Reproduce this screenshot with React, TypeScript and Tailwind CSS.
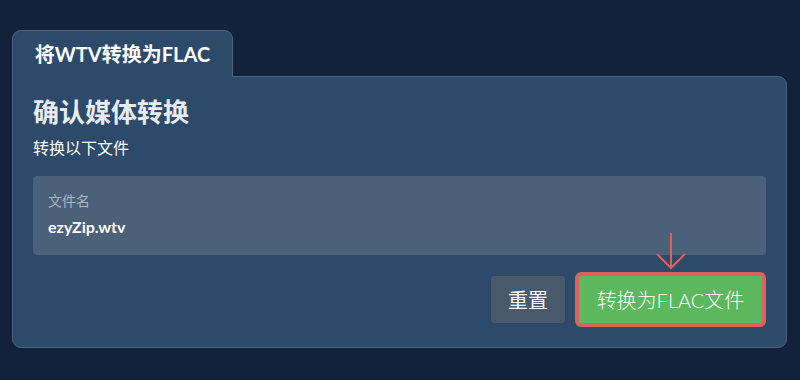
import React from "react";

export default function App() {
  return (
    <div
      className="w-[800px] h-[380px] bg-[#11223a] pt-[30px] pl-[12px] pr-[13px]"
      style={{ fontFamily: "Lato, 'Noto Sans CJK SC', sans-serif" }}
    >
      <div className="flex">
        <div className="w-[221px] h-[47px] bg-[#2d4a6a] border border-b-0 border-[#4d6584] rounded-t-[9px] flex items-center justify-center text-white font-bold text-[20px] -mb-px relative z-10">
          将WTV转换为FLAC
        </div>
      </div>
      <div className="h-[272px] bg-[#2d4a6a] border border-[#4d6584] rounded-b-[9px] rounded-tr-[9px] px-[20px] pt-[19px]">
        <div className="text-[#e8ecf0] font-bold text-[26px] leading-[32px]">确认媒体转换</div>
        <div className="text-white text-[16px] mt-[9px] leading-[22px]">转换以下文件</div>
        <div className="mt-[17px] h-[79px] bg-[#4b6079] rounded-[4px] px-[15px] pt-[16px]">
          <div className="text-[#aab4c0] text-[14px] leading-[18px]">文件名</div>
          <div className="text-white font-bold text-[16px] leading-[22px] mt-[6px]">ezyZip.wtv</div>
        </div>
        <div className="flex justify-end items-center gap-[10px] mt-[17px]">
          <button className="h-[47px] w-[74px] bg-[#4a5a6d] rounded-[4px] text-white text-[20px]">重置</button>
          <div className="relative">
            <svg
              className="absolute left-1/2 -translate-x-1/2 -top-[40px]"
              width="34"
              height="38"
              viewBox="0 0 34 38"
              fill="none"
            >
              <path d="M17 1 L17 36" stroke="#e06060" strokeWidth="2" />
              <path d="M3 22 L17 36 L31 22" stroke="#e06060" strokeWidth="2" />
            </svg>
            <button className="h-[55px] w-[191px] bg-[#5cb85c] border-[4px] border-[#e06060] rounded-[6px] text-white text-[20px] font-light">
              转换为FLAC文件
            </button>
          </div>
        </div>
      </div>
    </div>
  );
}
